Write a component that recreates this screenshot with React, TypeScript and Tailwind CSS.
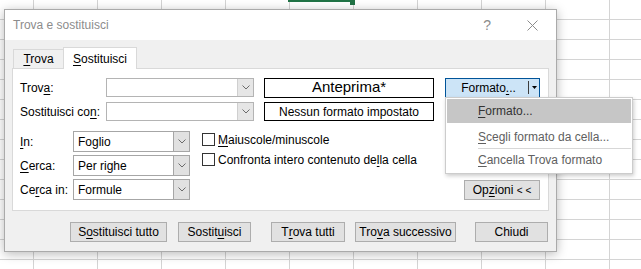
import React from 'react'

const font = { fontFamily: '"Liberation Sans", Arial, sans-serif' }

function K({ children }: { children: React.ReactNode }) {
  return <span className="underline underline-offset-[2px]">{children}</span>
}

function Chevron() {
  return (
    <svg width="8" height="5" viewBox="0 0 8 5">
      <polyline points="0.5,0.5 4,4 7.5,0.5" fill="none" stroke="#6b6b6b" strokeWidth="1" />
    </svg>
  )
}

function EditCombo() {
  return (
    <div className="flex w-[148px] h-[19px] border border-[#b4b4b4] bg-white">
      <div className="flex-1" />
      <div className="w-[16px] flex items-center justify-center bg-[#e6e6e6] border-l border-[#cfcfcf]">
        <Chevron />
      </div>
    </div>
  )
}

function ListCombo({ value }: { value: string }) {
  return (
    <div className="flex w-[117px] h-[21px] border border-[#a6a6a6] bg-white">
      <div className="flex-1 flex items-center pl-[4px] text-[12px] text-black">{value}</div>
      <div className="w-[16px] flex items-center justify-center bg-[#e1e1e1] border-l border-[#a6a6a6]">
        <Chevron />
      </div>
    </div>
  )
}

function Btn({ w, className = '', children }: { w: string; className?: string; children: React.ReactNode }) {
  return (
    <div className={`${w} ${className} h-[20px] flex items-center justify-center bg-[#e1e1e1] border border-[#adadad] text-[12px] text-black`}>
      {children}
    </div>
  )
}

function Grid() {
  const xs = [33, 97, 161, 225, 289, 353, 417, 481, 545, 609]
  const ys = [19, 39, 59, 79, 99, 119, 139, 159, 179, 199, 219, 239, 259]
  return (
    <svg className="absolute inset-0" width="641" height="269">
      {xs.map(x => <line key={'x' + x} x1={x + 0.5} y1="0" x2={x + 0.5} y2="269" stroke="#d4d4d4" />)}
      {ys.map(y => <line key={'y' + y} x1="0" y1={y + 0.5} x2="641" y2={y + 0.5} stroke="#d4d4d4" />)}
    </svg>
  )
}

export default function App() {
  return (
    <div className="relative w-[641px] h-[269px] overflow-hidden bg-white" style={font}>
      <Grid />
      <div className="absolute left-[288px] top-0 w-[62px] h-[2px] bg-[#217346]" />
      <div className="absolute left-[350px] top-0 w-[5px] h-[5px] bg-[#217346]" />

      {/* dialog */}
      <div className="absolute left-[4px] top-[9px] w-[553px] border border-[#aaaaaa] bg-[#f0f0f0] shadow-[0_2px_10px_rgba(0,0,0,0.28)]">
        <div className="h-[30px] bg-white flex items-center pl-[8px] text-[12px] text-[#8c8c8c]">
          <span>Trova e sostituisci</span>
          <span className="ml-auto mr-[36px] text-[14px] text-[#8c8c8c]">?</span>
          <svg className="mr-[18px]" width="11" height="11" viewBox="0 0 11 11">
            <path d="M0.5 0.5 L10.5 10.5 M10.5 0.5 L0.5 10.5" stroke="#8c8c8c" strokeWidth="1" />
          </svg>
        </div>

        <div className="pt-[7px]">
          <div className="flex items-end h-[21px] pl-[8px]">
            <div className="w-[50px] h-[19px] flex items-center justify-center border-l border-t border-[#d9d9d9] text-[12px] text-black">
              <span><K>T</K>rova</span>
            </div>
            <div className="relative z-10 w-[74px] h-[22px] -mb-px flex items-center justify-center bg-white border-l border-t border-r border-[#d9d9d9] text-[12px] text-black">
              <span><K>S</K>ostituisci</span>
            </div>
          </div>

          <div className="ml-[7px] w-[537px] border border-[#d9d9d9] bg-white pt-[9px] pl-[7px] pr-[8px] pb-[10px] text-[12px] text-black">
            <div className="flex items-center h-[19px]">
              <div className="w-[86px]">Trov<K>a</K>:</div>
              <EditCombo />
              <div className="ml-[10px] w-[170px] h-[20px] border border-black flex items-center justify-center text-[15px]">Anteprima*</div>
              <div className="ml-[11px] w-[95px] h-[20px] flex items-center bg-[#cce4f7] border border-[#005499]">
                <div className="flex-1 text-center pl-[3px]">Formato<K>.</K>..</div>
                <div className="w-px h-[13px] bg-[#3c3c3c]" />
                <div className="w-[10px] flex justify-center">
                  <svg width="5" height="3" viewBox="0 0 5 3"><polygon points="0,0 5,0 2.5,3" fill="#000" /></svg>
                </div>
              </div>
            </div>
            <div className="flex items-center h-[19px] mt-[5px]">
              <div className="w-[86px]">Sostituisci co<K>n</K>:</div>
              <EditCombo />
              <div className="ml-[10px] w-[170px] h-[19px] border border-black flex items-center justify-center">Nessun formato impostato</div>
            </div>

            <div className="flex mt-[10px]">
              <div className="flex flex-col gap-[3px]">
                <div className="flex items-center">
                  <div className="w-[53px]"><K>I</K>n:</div>
                  <ListCombo value="Foglio" />
                </div>
                <div className="flex items-center">
                  <div className="w-[53px]"><K>C</K>erca:</div>
                  <ListCombo value="Per righe" />
                </div>
                <div className="flex items-center">
                  <div className="w-[53px]">Ce<K>r</K>ca in:</div>
                  <ListCombo value="Formule" />
                </div>
              </div>
              <div className="ml-[12px] mt-[2px] flex flex-col gap-[7px]">
                <div className="flex items-center h-[13px]">
                  <div className="w-[13px] h-[13px] border border-[#333333] bg-white" />
                  <span className="ml-[3px]"><K>M</K>aiuscole/minuscole</span>
                </div>
                <div className="flex items-center h-[13px]">
                  <div className="w-[13px] h-[13px] border border-[#333333] bg-white" />
                  <span className="ml-[3px]">Confronta intero contenuto de<K>l</K>la cella</span>
                </div>
              </div>
              <Btn w="w-[76px]" className="ml-auto self-end">
                <span>Op<K>z</K>ioni <span className="text-[10px]">&lt; &lt;</span></span>
              </Btn>
            </div>
          </div>

          <div className="flex pl-[65px] mt-[11px] pb-[9px]">
            <Btn w="w-[97px]">S<K>o</K>stituisci tutto</Btn>
            <Btn w="w-[73px]" className="ml-[11px]">Sostit<K>u</K>isci</Btn>
            <Btn w="w-[74px]" className="ml-[20px]">T<K>r</K>ova tutti</Btn>
            <Btn w="w-[101px]" className="ml-[10px]">Tro<K>v</K>a successivo</Btn>
            <Btn w="w-[73px]" className="ml-[19px]">Chiudi</Btn>
          </div>
        </div>
      </div>

      {/* dropdown menu */}
      <div className="absolute left-[445px] top-[97px] w-[188px] h-[77px] bg-white border border-[#cccccc] shadow-[1px_2px_4px_rgba(0,0,0,0.2)] p-px text-[12px]">
        <div className="h-[24px] flex items-center pl-[31px] bg-[#c6c6c6] text-[#333333]">
          <span><K>F</K>ormato...</span>
        </div>
        <div className="h-[25px] pt-[7px] pl-[31px] leading-[14px] text-[#606060]">
          <span><K>S</K>cegli formato da cella...</span>
        </div>
        <div className="ml-[31px] h-px bg-[#d7d7d7]" />
        <div className="h-[22px] flex items-center pl-[31px] text-[#606060]">
          <span><K>C</K>ancella Trova formato</span>
        </div>
      </div>
    </div>
  )
}
